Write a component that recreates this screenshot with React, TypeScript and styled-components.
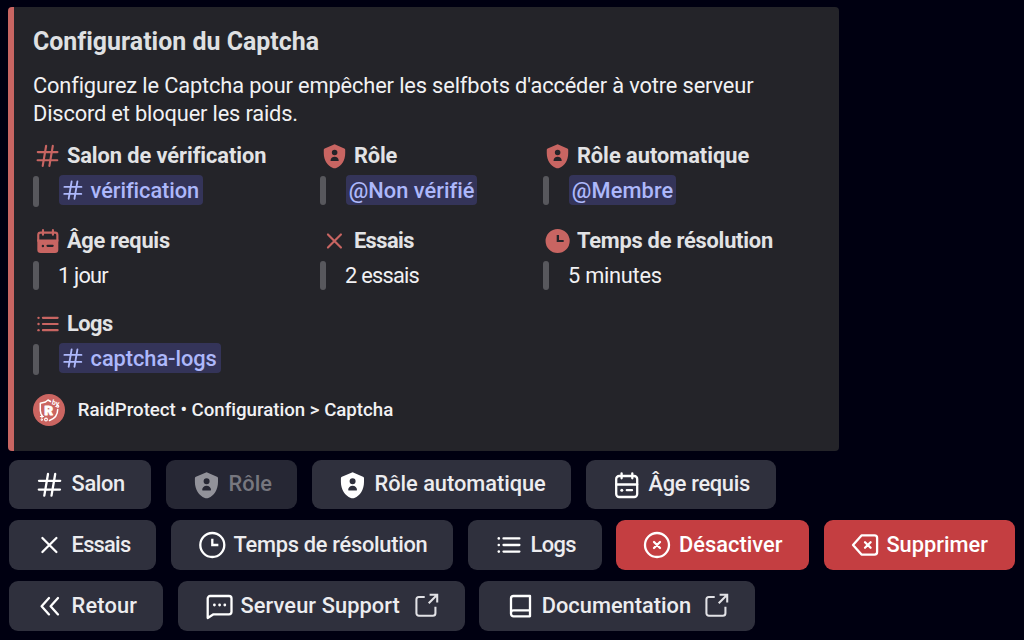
import React from "react";
import styled, { createGlobalStyle, css } from "styled-components";

const GlobalStyle = createGlobalStyle`
  *, *::before, *::after { box-sizing: border-box; }
  body {
    margin: 0;
    background: #000011;
    font-family: Roboto, "Noto Sans", sans-serif;
    font-kerning: normal;
    overflow: hidden;
  }
`;

const RED = "#c86562";

/* ---------- icons, all drawn on a 28 x 28 grid ---------- */

const Svg = styled.svg`
  display: block;
  flex: none;
  overflow: visible;
  fill: none;
  stroke: currentColor;
  stroke-width: 2.3;
  stroke-linecap: round;
  stroke-linejoin: round;
`;

type IconName =
  | "hash" | "shield" | "calendar" | "calendarFilled" | "cross" | "clock" | "clockFilled"
  | "list" | "disable" | "erase" | "back" | "chat" | "book" | "external";

const shapes: Record<IconName, React.ReactNode> = {
  hash: <path d="M3 9.8H24.2M2.8 18.6H24M12 3L8.3 24.6M19.2 3L15.5 24.6" />,
  shield: (
    <path
      stroke="none"
      fill="currentColor"
      fillRule="evenodd"
      d="M13.6 1.3L24 5.8c.7.3 1 .8 1 1.5V11c0 7.5-3.8 13.8-9.6 15.9-1.2.5-2.4.5-3.6 0C6 24.8 1.9 18.5 1.9 11V7.3c0-.7.4-1.2 1-1.5zM13.6 7.3a3 3 0 1 0 0 6 3 3 0 0 0 0-6zM9.2 19c0 .3.2.5.5.5h7.8c.3 0 .5-.2.5-.5 0-2.5-1.9-4.2-4.4-4.2S9.2 16.5 9.2 19z"
    />
  ),
  calendar: (
    <>
      <rect x="3.2" y="5" width="21" height="21" rx="3" />
      <path d="M3.2 13.5H24.2M8.6 2.3V7.3M19.3 2.3V7.3M13.8 19.2H19" />
      <circle cx="8.8" cy="19.2" r="1.5" fill="currentColor" stroke="none" />
    </>
  ),
  calendarFilled: (
    <>
      <path
        stroke="none"
        fill="currentColor"
        fillRule="evenodd"
        d="M2.5 12.4H25.1V23.5a3.5 3.5 0 0 1-3.5 3.5H6a3.5 3.5 0 0 1-3.5-3.5zM8.5 18a1.3 1.3 0 1 0 0 2.6 1.3 1.3 0 0 0 0-2.6zM13.5 18a1.2 1.2 0 0 0 0 2.4H19a1.2 1.2 0 0 0 0-2.4z"
      />
      <path d="M3.5 14V7.5A2.5 2.5 0 0 1 6 5H21.6a2.5 2.5 0 0 1 2.5 2.5V14M8.6 2.3V7.3M19.3 2.3V7.3" />
    </>
  ),
  cross: <path d="M6.4 7L20.4 21M20.4 7L6.4 21" />,
  clock: (
    <>
      <circle cx="14.3" cy="14" r="12" />
      <path strokeLinecap="square" strokeLinejoin="miter" d="M14.3 9V14H19.2" />
    </>
  ),
  clockFilled: (
    <path
      stroke="none"
      fill="currentColor"
      fillRule="evenodd"
      d="M13.6 1a13 13 0 1 0 0 26 13 13 0 0 0 0-26zM12.6 7.5V15.2H20.1V12.8H15.1V7.5z"
    />
  ),
  list: (
    <>
      <path d="M8.5 7.4H24.4M8.5 14H24.4M8.5 20.6H24.4" />
      <g fill="currentColor" stroke="none">
        <circle cx="3.8" cy="7.4" r="1.3" />
        <circle cx="3.8" cy="14" r="1.3" />
        <circle cx="3.8" cy="20.6" r="1.3" />
      </g>
    </>
  ),
  disable: (
    <>
      <circle cx="14" cy="14" r="12" />
      <path d="M11 11L17 17M17 11L11 17" />
    </>
  ),
  erase: (
    <>
      <path d="M10.5 4.4H23.5a2.6 2.6 0 0 1 2.6 2.6V21a2.6 2.6 0 0 1-2.6 2.6H10.5L2 14z" />
      <path d="M14 11.2L19.6 16.8M19.6 11.2L14 16.8" />
    </>
  ),
  back: <path d="M13 6L5.6 14.2L13 22.4M22 6L14.6 14.2L22 22.4" />,
  chat: (
    <>
      <path d="M5.2 4H24a2.5 2.5 0 0 1 2.5 2.5V19.8a2.5 2.5 0 0 1-2.5 2.5H8.5L2.7 26V6.5A2.5 2.5 0 0 1 5.2 4z" />
      <g fill="currentColor" stroke="none">
        <circle cx="9.4" cy="13" r="1.4" />
        <circle cx="14.6" cy="13" r="1.4" />
        <circle cx="19.8" cy="13" r="1.4" />
      </g>
    </>
  ),
  book: (
    <path d="M24 18.4V4H7.5A2.5 2.5 0 0 0 5 6.5V21.8a2.5 2.5 0 0 0 2.5 2.5H24V18.4H7.5A2.5 2.5 0 0 0 5 20.9" />
  ),
  external: (
    <path
      strokeLinecap="butt"
      strokeLinejoin="miter"
      d="M12 4.5H5.5A2.8 2.8 0 0 0 2.7 7.3V22.7a2.8 2.8 0 0 0 2.8 2.8H21.2a2.8 2.8 0 0 0 2.8-2.8V15.5M17.5 2H26V10.5M26 2L16.5 11.5"
    />
  ),
};

function Icon({ name, size = 28 }: { name: IconName; size?: number }) {
  return (
    <Svg width={size} height={size} viewBox="0 0 28 28" aria-hidden>
      {shapes[name]}
    </Svg>
  );
}

/* ---------- embed ---------- */

const Page = styled.main`
  width: 1024px;
  height: 640px;
  padding: 6.5px 9px 0 8.4px;
`;

const Embed = styled.article`
  width: 831px;
  height: 444.5px;
  padding: 20px 18px 0 18.6px;
  border-left: 6px solid ${RED};
  border-radius: 4px;
  background: #242429;
  color: #f1f1f3;
`;

const Tracked = styled.span<{ $track?: number }>`
  letter-spacing: ${({ $track = 0 }) => $track}px;
  white-space: nowrap;
`;

const Title = styled.h1`
  margin: 0;
  font-size: 24.9px;
  line-height: 30px;
  font-weight: 700;
  color: #dfe0e2;
`;

const Description = styled.p`
  margin: 15px 0 0;
  font-size: 21.8px;
  line-height: 28px;
  display: flex;
  flex-direction: column;
`;

const Fields = styled.section`
  display: grid;
  grid-template-columns: 287px 223px auto;
  grid-template-rows: 85px 83.3px 83px;
  margin-top: 14.5px;
`;

const Field = styled.div`
  display: flex;
  flex-direction: column;
  align-items: flex-start;
`;

const FieldName = styled.h2`
  display: flex;
  align-items: center;
  gap: 6px;
  height: 28px;
  margin: 0;
  padding-left: 1.9px;
  font-size: 21.8px;
  line-height: 28px;
  font-weight: 700;
  color: #e2e3e5;
  svg { color: ${RED}; }
`;

const Quote = styled.div<{ $tall?: boolean }>`
  display: flex;
  height: ${({ $tall }) => ($tall ? 31 : 29)}px;
  margin-top: 5.8px;
  font-size: 21.8px;
  line-height: 29px;
  &::before {
    content: "";
    width: 6px;
    margin-right: 19px;
    border-radius: 3px;
    background: #58585d;
  }
`;

const Mention = styled.span<{ $w: number }>`
  display: flex;
  align-items: center;
  width: ${({ $w }) => $w}px;
  height: 30px;
  margin: -1px 0 0 1px;
  padding: 1px 0 0 2.8px;
  border-radius: 4px;
  background: #343459;
  color: #adb8fb;
  font-weight: 500;
  svg { margin: 0 6px 0 0.3px; }
`;

const Footer = styled.footer`
  display: flex;
  align-items: center;
  gap: 12.8px;
  height: 32px;
  margin-top: 0.7px;
  font-size: 18.7px;
  font-weight: 500;
`;

const fields: {
  icon: IconName; name: string; track: number;
  value: string; valueTrack: number; channel?: boolean; mention?: number;
}[] = [
  { icon: "hash", name: "Salon de vérification", track: -0.07, value: "vérification", valueTrack: -0.06, channel: true, mention: 144 },
  { icon: "shield", name: "Rôle", track: -0.1, value: "@Non vérifié", valueTrack: 0.02, mention: 131 },
  { icon: "shield", name: "Rôle automatique", track: -0.01, value: "@Membre", valueTrack: 0.12, mention: 107 },
  { icon: "calendarFilled", name: "Âge requis", track: -0.23, value: "1 jour", valueTrack: -0.8 },
  { icon: "cross", name: "Essais", track: -0.55, value: "2 essais", valueTrack: -0.75 },
  { icon: "clockFilled", name: "Temps de résolution", track: -0.22, value: "5 minutes", valueTrack: -0.25 },
  { icon: "list", name: "Logs", track: -0.5, value: "captcha-logs", valueTrack: -0.05, channel: true, mention: 162 },
];

function Avatar() {
  return (
    <Svg width="32" height="32" viewBox="0 0 32 32" aria-hidden>
      <circle cx="16" cy="16" r="16" fill="#cb6561" stroke="none" />
      <g stroke="#fff" strokeWidth="1.5">
        <path d="M17.5 7.5L15 6L12.5 8L7.3 9.2V16.5Q7.5 20 9.5 22.5" />
        <path d="M24.7 15.5C24.7 20.5 21.5 24.7 16.5 26.5" />
        <path d="M7.3 22.5h3.2M8.9 20.9v3.2" strokeWidth="1" />
        <circle cx="13" cy="25.5" r="1.4" strokeWidth="1.1" />
        <circle cx="8.7" cy="25.8" r="0.7" strokeWidth="0.9" />
        <circle cx="24.8" cy="12.3" r="1" strokeWidth="1.1" />
      </g>
      <g fill="#fff" stroke="none" fontFamily="Roboto" fontWeight="900">
        <text x="11.2" y="20.8" fontSize="13.5" stroke="#fff" strokeWidth="0.8">R</text>
        <text x="18.5" y="10.3" fontSize="7" fontWeight="700" transform="rotate(14 18.5 10.3)">by</text>
      </g>
    </Svg>
  );
}

/* ---------- buttons ---------- */

const Actions = styled.nav`
  display: flex;
  flex-direction: column;
  gap: 10.8px;
  margin: 8.7px 0 0 0.6px;
`;

const ActionRow = styled.div`
  display: flex;
  gap: 14.6px;
`;

const Button = styled.button<{ $w: number; $danger?: boolean }>`
  display: flex;
  align-items: center;
  gap: 7.6px;
  width: ${({ $w }) => $w}px;
  height: 49.8px;
  padding: 0 25.8px 0 27px;
  border: 0;
  border-radius: 9px;
  background: #2f303d;
  color: #fff;
  font: 500 21.8px/28px Roboto, "Noto Sans", sans-serif;
  flex: none;
  & > span { color: #ececef; margin-top: -0.2px; }
  & > svg + span + svg { margin-left: auto; color: #e2e2e6; }
  ${({ $danger }) => $danger && css`
    background: #c43e41;
    & > span { color: #fff; }
  `}
  &:disabled {
    background: #262734;
    color: #92929a;
    & > span { color: #77777f; }
  }
`;

interface Action {
  icon: IconName; label: string; w: number; track: number;
  danger?: boolean; disabled?: boolean; link?: boolean;
}

const rows: Action[][] = [
  [
    { icon: "hash", label: "Salon", w: 142.4, track: -0.34 },
    { icon: "shield", label: "Rôle", w: 131.4, track: 0, disabled: true },
    { icon: "shield", label: "Rôle automatique", w: 259.4, track: -0.03 },
    { icon: "calendar", label: "Âge requis", w: 190.4, track: -0.3 },
  ],
  [
    { icon: "cross", label: "Essais", w: 147.4, track: -0.75 },
    { icon: "clock", label: "Temps de résolution", w: 282.4, track: -0.27 },
    { icon: "list", label: "Logs", w: 133.9, track: -0.6 },
    { icon: "disable", label: "Désactiver", w: 192.8, track: 0.03, danger: true },
    { icon: "erase", label: "Supprimer", w: 190.8, track: 0, danger: true },
  ],
  [
    { icon: "back", label: "Retour", w: 154.4, track: 0.15 },
    { icon: "chat", label: "Serveur Support", w: 286.6, track: 0.09, link: true },
    { icon: "book", label: "Documentation", w: 275.8, track: 0.01, link: true },
  ],
];

export default function App() {
  return (
    <>
      <GlobalStyle />
      <Page>
        <Embed>
          <Title><Tracked $track={0.02}>Configuration du Captcha</Tracked></Title>
          <Description>
            <Tracked $track={-0.13}>Configurez le Captcha pour empêcher les selfbots d'accéder à votre serveur</Tracked>
            <Tracked $track={-0.15}>Discord et bloquer les raids.</Tracked>
          </Description>
          <Fields>
            {fields.map((f) => (
              <Field key={f.name}>
                <FieldName>
                  <Icon name={f.icon} size={26} />
                  <Tracked $track={f.track}>{f.name}</Tracked>
                </FieldName>
                <Quote $tall={f.channel}>
                  {f.mention ? (
                    <Mention $w={f.mention}>
                      {f.channel && <Icon name="hash" size={22.5} />}
                      <Tracked $track={f.valueTrack}>{f.value}</Tracked>
                    </Mention>
                  ) : (
                    <Tracked $track={f.valueTrack}>{f.value}</Tracked>
                  )}
                </Quote>
              </Field>
            ))}
          </Fields>
          <Footer>
            <Avatar />
            <Tracked $track={-0.02}>RaidProtect • Configuration &gt; Captcha</Tracked>
          </Footer>
        </Embed>
        <Actions>
          {rows.map((row, i) => (
            <ActionRow key={i}>
              {row.map((a) => (
                <Button key={a.label} $w={a.w} $danger={a.danger} disabled={a.disabled}>
                  <Icon name={a.icon} />
                  <Tracked $track={a.track}>{a.label}</Tracked>
                  {a.link && <Icon name="external" size={25} />}
                </Button>
              ))}
            </ActionRow>
          ))}
        </Actions>
      </Page>
    </>
  );
}
